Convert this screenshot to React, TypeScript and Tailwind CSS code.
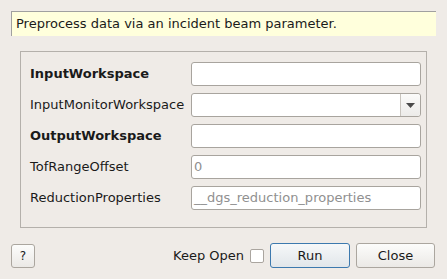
import React from "react";

const font = { fontFamily: '"DejaVu Sans", sans-serif' };

function Field({ children }: { children?: React.ReactNode }) {
  return (
    <div className="h-[24px] w-[230px] rounded-[3px] border border-[#a8a49e] bg-white flex items-center pl-[2px] text-[13px] text-[#909090]">
      {children}
    </div>
  );
}

export default function App() {
  const rows: { label: string; bold?: boolean; kind: "text" | "combo"; value?: string }[] = [
    { label: "InputWorkspace", bold: true, kind: "text" },
    { label: "InputMonitorWorkspace", kind: "combo" },
    { label: "OutputWorkspace", bold: true, kind: "text" },
    { label: "TofRangeOffset", kind: "text", value: "0" },
    { label: "ReductionProperties", kind: "text", value: "__dgs_reduction_properties" },
  ];
  return (
    <div className="w-[447px] h-[279px] bg-[#efebe7] text-[#1a1a1a] flex flex-col" style={font}>
      <div className="mt-[11px] ml-[11px] w-[425px] h-[25px] bg-[#ffffdc] border-l border-t border-[#a0a0a0] flex items-center pl-[4px] text-[13px]">
        Preprocess data via an incident beam parameter.
      </div>
      <div className="mt-[15px] ml-[20px] w-[407px] h-[177px] border border-[#b4b0ab] flex flex-col gap-[7px] pt-[10px] pl-[9px]">
        {rows.map((r) => (
          <div key={r.label} className="flex items-center h-[24px]">
            <div className={`w-[161px] text-[13px] ${r.bold ? "font-bold" : ""}`}>{r.label}</div>
            {r.kind === "combo" ? (
              <div className="h-[24px] w-[230px] rounded-[3px] border border-[#a8a49e] bg-white flex">
                <div className="flex-1" />
                <div className="w-[20px] border-l border-[#c8c4be] bg-gradient-to-b from-[#fbfbfa] to-[#ecebe9] rounded-r-[3px] flex items-center justify-center">
                  <svg width="9" height="5" viewBox="0 0 9 5"><path d="M0 0H9L4.5 5Z" fill="#4a4a4a" /></svg>
                </div>
              </div>
            ) : (
              <Field>{r.value}</Field>
            )}
          </div>
        ))}
      </div>
      <div className="mt-[15px] flex items-center pl-[11px] pr-[12px] text-[13px]">
        <div className="w-[24px] h-[24px] rounded-[3px] border border-[#aba69f] bg-gradient-to-b from-[#fcfcfb] to-[#ebe9e6] flex items-center justify-center text-[12px]">?</div>
        <div className="flex-1" />
        <span>Keep Open</span>
        <div className="ml-[6px] w-[14px] h-[14px] border border-[#aaa59f] bg-white rounded-[2px]" />
        <div className="ml-[6px] w-[80px] h-[25px] rounded-[3px] border border-[#3c79ae] bg-gradient-to-b from-[#f6f8f9] to-[#e1e6ea] flex items-center justify-center">Run</div>
        <div className="ml-[6px] w-[79px] h-[25px] rounded-[3px] border border-[#aba69f] bg-gradient-to-b from-[#fcfcfb] to-[#ebe9e6] flex items-center justify-center">Close</div>
      </div>
    </div>
  );
}
